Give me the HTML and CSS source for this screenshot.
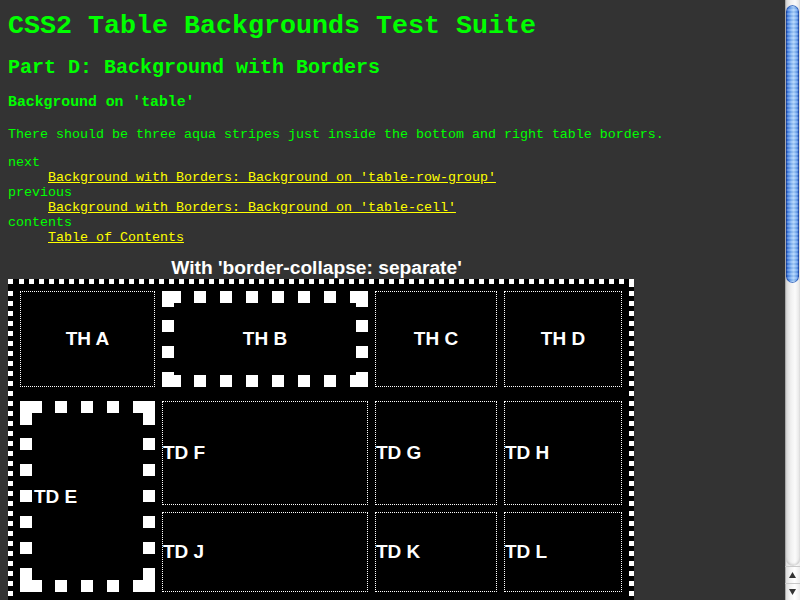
FILE: index.html
```
<!DOCTYPE html>
<html lang="en">
<head>
<meta charset="utf-8">
<title>CSS2 Table Backgrounds Test Suite</title>
<link rel="stylesheet" href="styles.css">
</head>
<body>
<h1 class="title">CSS2 Table Backgrounds Test Suite</h1>
<h2 class="part">Part D: Background with Borders</h2>
<h3 class="test">Background on 'table'</h3>
<p class="desc">There should be three aqua stripes just inside the bottom and right table borders.</p>
<dl class="nav">
  <dt>next</dt>
  <dd><a href="#">Background with Borders: Background on 'table-row-group'</a></dd>
  <dt>previous</dt>
  <dd><a href="#">Background with Borders: Background on 'table-cell'</a></dd>
  <dt>contents</dt>
  <dd><a href="#">Table of Contents</a></dd>
</dl>
<div class="figure">
  <div class="caption">With 'border-collapse: separate'</div>
  <div class="grid">
    <div class="cell th dot">TH A</div>
    <div class="cell th thb">TH B</div>
    <div class="cell th dot">TH C</div>
    <div class="cell th dot">TH D</div>
    <div class="cell td tde">TD E</div>
    <div class="cell td dot c2 r3">TD F</div>
    <div class="cell td dot c3 r3">TD G</div>
    <div class="cell td dot c4 r3">TD H</div>
    <div class="cell td dot c2 r4">TD J</div>
    <div class="cell td dot c3 r4">TD K</div>
    <div class="cell td dot c4 r4">TD L</div>
  </div>
</div>
<div class="scrollbar" aria-hidden="true">
  <div class="track"></div>
  <div class="thumb"></div>
  <div class="arrows">
    <svg class="arrow" width="15" height="16" viewBox="0 0 15 16"><path d="M4 11 L7.5 5 L11 11 Z" fill="#333"/></svg>
    <svg class="arrow" width="15" height="16" viewBox="0 0 15 16"><path d="M4 5 L7.5 11 L11 5 Z" fill="#333"/></svg>
  </div>
</div>
</body>
</html>
```

FILE: styles.css
```
html {
  overflow: hidden;
  background: #333333;
}
body {
  margin: 8px;
  background: #333333;
  color: #00ff00;
  font-family: "Liberation Mono", "DejaVu Sans Mono", monospace;
  font-size: 13.33px;
}
.title {
  font-size: 26.67px;
  font-weight: bold;
  margin: 3px 0 0 0;
}
.part {
  font-size: 20px;
  font-weight: bold;
  margin: 15px 0 0 0;
}
.test {
  font-size: 14.8px;
  font-weight: bold;
  margin: 15px 0 0 0;
}
.desc {
  margin: 17px 0 0 0;
}
.nav {
  margin: 13px 0 0 0;
}
.nav dt {
  margin: 0;
}
.nav dd {
  margin: 0 0 0 40px;
}
.nav a {
  color: #ffff00;
  text-decoration: underline;
}
.figure {
  width: 626px;
  margin-top: 12px;
}
.caption {
  font-family: "Liberation Sans", Arial, sans-serif;
  font-weight: bold;
  font-size: 19.2px;
  color: #ffffff;
  text-align: center;
  padding-right: 9px;
}
.grid {
  display: grid;
  grid-template-columns: 135px 206px 122px 118px;
  grid-template-rows: 96px 0 104px 80px;
  gap: 7px;
  padding: 7px 7px 20px 7px;
  border: 5px solid transparent;
  background-color: #000000;
  background-image:
    linear-gradient(#fff, #fff),
    linear-gradient(#fff, #fff),
    repeating-linear-gradient(90deg, #fff 0 5px, transparent 5px 10px),
    repeating-linear-gradient(90deg, #fff 0 5px, transparent 5px 10px),
    repeating-linear-gradient(180deg, #fff 0 5px, transparent 5px 10px),
    repeating-linear-gradient(180deg, #fff 0 5px, transparent 5px 10px);
  background-origin: border-box;
  background-clip: border-box;
  background-repeat: no-repeat;
  background-position:
    0 0,
    right 0 top 0,
    11px 0,
    11px 100%,
    0 12px,
    100% 12px;
  background-size:
    5px 5px,
    5px 8px,
    calc(100% - 11px) 5px,
    calc(100% - 11px) 5px,
    5px calc(100% - 12px),
    5px calc(100% - 12px);
}
.cell {
  box-sizing: border-box;
  display: flex;
  align-items: center;
  font-family: "Liberation Sans", Arial, sans-serif;
  font-weight: bold;
  font-size: 19px;
  color: #ffffff;
  min-width: 0;
}
.th {
  grid-row: 1;
  justify-content: center;
}
.td {
  justify-content: flex-start;
}
.dot {
  border: 1px dotted #ffffff;
}
.c2 { grid-column: 2; }
.c3 { grid-column: 3; }
.c4 { grid-column: 4; }
.r3 { grid-row: 3; }
.r4 { grid-row: 4; }
.thb {
  border: 12px solid transparent;
  background-image:
    linear-gradient(90deg, #fff 0 19px, transparent 19px 32px, #fff 32px 44px, transparent 44px 58px, #fff 58px 70px, transparent 70px 84px, #fff 84px 96px, transparent 96px 110px, #fff 110px 122px, transparent 122px 136px, #fff 136px 148px, transparent 148px 162px, #fff 162px 174px, transparent 174px 188px, #fff 188px),
    linear-gradient(90deg, #fff 0 19px, transparent 19px 32px, #fff 32px 44px, transparent 44px 58px, #fff 58px 70px, transparent 70px 84px, #fff 84px 96px, transparent 96px 110px, #fff 110px 122px, transparent 122px 136px, #fff 136px 148px, transparent 148px 162px, #fff 162px 174px, transparent 174px 188px, #fff 188px),
    linear-gradient(180deg, #fff 0 16px, transparent 16px 29px, #fff 29px 41px, transparent 41px 55px, #fff 55px 67px, transparent 67px 81px, #fff 81px),
    linear-gradient(180deg, #fff 0 16px, transparent 16px 29px, #fff 29px 41px, transparent 41px 55px, #fff 55px 67px, transparent 67px 81px, #fff 81px);
  background-origin: border-box;
  background-repeat: no-repeat;
  background-position: 0 0, 0 100%, 0 0, 100% 0;
  background-size: 100% 12px, 100% 12px, 12px 100%, 12px 100%;
}
.tde {
  grid-column: 1;
  grid-row: 3 / span 2;
  border: 12px solid transparent;
  padding-left: 2px;
  background-image:
    linear-gradient(90deg, #fff 0 22px, transparent 22px 35px, #fff 35px 47px, transparent 47px 61px, #fff 61px 73px, transparent 73px 87px, #fff 87px 99px, transparent 99px 113px, #fff 113px),
    linear-gradient(90deg, #fff 0 22px, transparent 22px 35px, #fff 35px 47px, transparent 47px 61px, #fff 61px 73px, transparent 73px 87px, #fff 87px 99px, transparent 99px 113px, #fff 113px),
    linear-gradient(180deg, #fff 0 24px, transparent 24px 37px, #fff 37px 49px, transparent 49px 63px, #fff 63px 75px, transparent 75px 89px, #fff 89px 101px, transparent 101px 115px, #fff 115px 127px, transparent 127px 141px, #fff 141px 153px, transparent 153px 167px, #fff 167px),
    linear-gradient(180deg, #fff 0 24px, transparent 24px 37px, #fff 37px 49px, transparent 49px 63px, #fff 63px 75px, transparent 75px 89px, #fff 89px 101px, transparent 101px 115px, #fff 115px 127px, transparent 127px 141px, #fff 141px 153px, transparent 153px 167px, #fff 167px);
  background-origin: border-box;
  background-repeat: no-repeat;
  background-position: 0 0, 0 100%, 0 0, 100% 0;
  background-size: 100% 12px, 100% 12px, 12px 100%, 12px 100%;
}
.scrollbar {
  position: fixed;
  top: 0;
  right: 0;
  width: 15px;
  height: 600px;
  background: linear-gradient(90deg, #a8a8a8 0 1px, #dcdcdc 1px, #f2f2f2 35%, #ffffff 65%, #ececec 100%);
}
.track {
  position: absolute;
  top: 0;
  left: 1px;
  right: 0;
  height: 566px;
  border-radius: 0 0 7px 7px;
  background: linear-gradient(90deg, #d6d6d6, #f0f0f0 35%, #fbfbfb 65%, #e4e4e4);
  box-shadow: inset 0 -2px 2px rgba(0, 0, 0, 0.12);
}
.thumb {
  position: absolute;
  top: 5px;
  left: 1px;
  width: 13px;
  height: 278px;
  border-radius: 7px;
  background:
    repeating-linear-gradient(180deg, rgba(255, 255, 255, 0.18) 0 2px, rgba(0, 0, 0, 0.04) 2px 4px),
    linear-gradient(90deg, #1a4db5, #4a88e8 18%, #8dbdf8 45%, #a8d0fb 60%, #6ea6f2 82%, #2a62c8);
  box-shadow: inset 0 0 0 1px rgba(20, 60, 150, 0.6);
}
.arrows {
  position: absolute;
  top: 566px;
  left: 0;
  width: 15px;
  display: flex;
  flex-direction: column;
}
.arrow {
  display: block;
  border-top: 1px solid #c8c8c8;
}
```
